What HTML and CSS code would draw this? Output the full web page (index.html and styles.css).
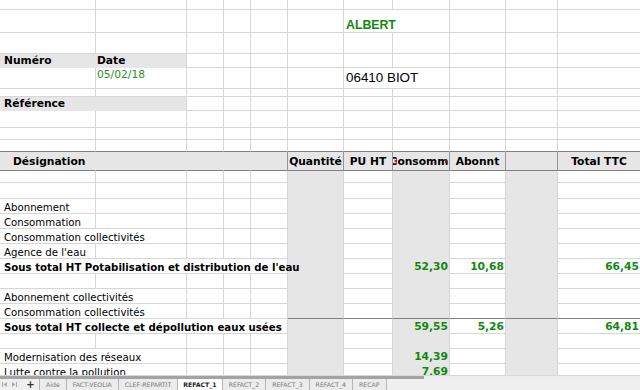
FILE: index.html
```html
<!DOCTYPE html>
<html lang="fr">
<head>
    <meta charset="UTF-8">
    <title>REFACT_1</title>
    <link rel="stylesheet" href="styles.css">
</head>
<body>
<div class="page">
    <div class="sheet">
        <!-- top block -->
        <div class="row h10"><div></div><div></div><div></div><div></div><div></div><div></div><div></div><div></div><div></div><div></div><div></div></div>
        <div class="row h23"><div></div><div></div><div></div><div></div><div></div><div></div><div class="s2 albert">ALBERT</div><div></div><div></div><div></div></div>
        <div class="row h21"><div></div><div></div><div></div><div></div><div></div><div></div><div></div><div></div><div></div><div></div><div></div></div>
        <div class="row h14"><div class="g ga b">Numéro</div><div class="g b pb">Date</div><div></div><div></div><div></div><div></div><div></div><div></div><div></div><div></div><div></div></div>
        <div class="row h21"><div></div><div class="date pb">05/02/18</div><div></div><div></div><div></div><div></div><div class="s2 city">06410 BIOT</div><div></div><div></div><div></div></div>
        <div class="row h8"><div></div><div></div><div></div><div></div><div></div><div></div><div></div><div></div><div></div><div></div><div></div></div>
        <div class="row h14"><div class="g ga b">Référence</div><div class="g"></div><div></div><div></div><div></div><div></div><div></div><div></div><div></div><div></div><div></div></div>
        <div class="row h17"><div></div><div></div><div></div><div></div><div></div><div></div><div></div><div></div><div></div><div></div><div></div></div>
        <div class="row h12"><div></div><div></div><div></div><div></div><div></div><div></div><div></div><div></div><div></div><div></div><div></div></div>
        <div class="row h12 above"><div></div><div></div><div></div><div></div><div></div><div></div><div></div><div></div><div></div><div></div><div></div></div>

        <!-- table header -->
        <div class="row h19 head">
            <div class="desig">Désignation</div><div></div><div></div><div></div><div class="edge"></div>
            <div class="edge">Quantité</div><div class="edge">PU HT</div>
            <div class="edge clip"><span>Consomm.</span></div>
            <div class="edge">Abonnt</div><div class="edge"></div><div>Total TTC</div>
        </div>

        <!-- table body -->
        <div class="row h12 body"><div></div><div></div><div></div><div></div><div></div><div class="g"></div><div></div><div class="g"></div><div></div><div class="g"></div><div></div></div>
        <div class="row h16 body"><div></div><div></div><div></div><div></div><div></div><div class="g"></div><div></div><div class="g"></div><div></div><div class="g"></div><div></div></div>
        <div class="row h15 body"><div class="lbl">Abonnement</div><div></div><div></div><div></div><div></div><div class="g"></div><div></div><div class="g"></div><div></div><div class="g"></div><div></div></div>
        <div class="row h15 body"><div class="lbl">Consommation</div><div></div><div></div><div></div><div></div><div class="g"></div><div></div><div class="g"></div><div></div><div class="g"></div><div></div></div>
        <div class="row h15 body"><div class="s2 lbl">Consommation collectivités</div><div></div><div></div><div></div><div class="g"></div><div></div><div class="g"></div><div></div><div class="g"></div><div></div></div>
        <div class="row h15 body"><div class="lbl">Agence de l'eau</div><div></div><div></div><div></div><div></div><div class="g"></div><div></div><div class="g"></div><div></div><div class="g"></div><div></div></div>
        <div class="row h15 body"><div class="s5 lbl b over">Sous total HT Potabilisation et distribution de l'eau</div><div class="g"></div><div></div><div class="g num">52,30</div><div class="num">10,68</div><div class="g"></div><div class="num">66,45</div></div>
        <div class="row h15 body"><div></div><div></div><div></div><div></div><div></div><div class="g"></div><div></div><div class="g"></div><div></div><div class="g"></div><div></div></div>
        <div class="row h15 body"><div class="s2 lbl">Abonnement collectivités</div><div></div><div></div><div></div><div class="g"></div><div></div><div class="g"></div><div></div><div class="g"></div><div></div></div>
        <div class="row h15 body"><div class="s2 lbl">Consommation collectivités</div><div></div><div></div><div></div><div class="g dk"></div><div class="dk"></div><div class="g dk"></div><div class="dk"></div><div class="g dk"></div><div class="dk"></div></div>
        <div class="row h15 body"><div class="s5 lbl b over">Sous total HT collecte et dépollution eaux usées</div><div class="g"></div><div></div><div class="g num">59,55</div><div class="num">5,26</div><div class="g"></div><div class="num">64,81</div></div>
        <div class="row h15 body"><div></div><div></div><div></div><div></div><div></div><div class="g"></div><div></div><div class="g"></div><div></div><div class="g"></div><div></div></div>
        <div class="row h15 body"><div class="s2 lbl">Modernisation des réseaux</div><div></div><div></div><div></div><div class="g"></div><div></div><div class="g num">14,39</div><div></div><div class="g"></div><div></div></div>
        <div class="row h15 body"><div class="s2 lbl">Lutte contre la pollution</div><div></div><div></div><div></div><div class="g"></div><div></div><div class="g num">7,69</div><div></div><div class="g"></div><div></div></div>
    </div>

    <div class="hscroll"><div class="thumb"></div></div>

    <div class="tabbar">
        <span class="nav">
            <svg width="5" height="5" viewBox="0 0 5 5"><rect x="0" y="0" width="1" height="5" fill="#aaa"/><path d="M5 0 L1.5 2.5 L5 5 Z" fill="#aaa"/></svg>
        </span>
        <span class="nav">
            <svg width="5" height="5" viewBox="0 0 5 5"><path d="M0 0 L3.5 2.5 L0 5 Z" fill="#aaa"/><rect x="4" y="0" width="1" height="5" fill="#aaa"/></svg>
        </span>
        <span class="add">+</span>
        <span class="tab">Aide</span>
        <span class="tab">FACT-VEOLIA</span>
        <span class="tab">CLEF-REPARTIT</span>
        <span class="tab active">REFACT_1</span>
        <span class="tab">REFACT_2</span>
        <span class="tab">REFACT_3</span>
        <span class="tab">REFACT_4</span>
        <span class="tab">RECAP</span>
    </div>
</div>
</body>
</html>
```

FILE: styles.css
```css
* {
    box-sizing: border-box;
}
body {
    margin: 0;
    font-family: "DejaVu Sans", sans-serif;
    font-size: 10.7px;
    color: #000;
    background: #fff;
}
.page {
    height: 390px;
    display: flex;
    flex-direction: column;
    overflow: hidden;
}
.sheet {
    height: 375px;
    flex: none;
    overflow: hidden;
}

/* one spreadsheet row, same columns everywhere */
.row {
    display: grid;
    grid-template-columns: 96px 91px 37px 27px 37px 56px 49px 57px 56px 52px 82px;
}
.row > div {
    display: flex;
    align-items: flex-end;
    padding: 0 2px;
    white-space: nowrap;
    border-right: 1px solid #d6d6d6;
    border-bottom: 1px solid #d6d6d6;
    min-width: 0;
}
.row > div:first-child {
    padding-left: 4px;
}
.row > div:last-child {
    border-right: none;
}
.h8 { height: 8px; }
.h10 { height: 10px; }
.h12 { height: 12px; }
.h14 { height: 14px; }
.h15 { height: 15px; }
.h16 { height: 16px; }
.h17 { height: 17px; }
.h19 { height: 19px; }
.h21 { height: 21px; }
.h23 { height: 23px; }

.s2 { grid-column: span 2; }
.s3 { grid-column: span 3; }
.s5 { grid-column: span 5; }
.over { z-index: 1; }

.b { font-weight: bold; }
.lbl { font-size: 10.2px; }
.g {
    background: #e6e6e6;
    border-bottom-color: #e6e6e6 !important;
}
.ga {
    border-right-color: #e6e6e6 !important;
}
.pb { padding-left: 1px !important; }

.albert {
    font-family: "Liberation Sans", Arial, sans-serif;
    font-weight: bold;
    font-size: 12.3px;
    color: #108810;
}
.date {
    align-items: flex-start !important;
    color: #2f8f1f;
}
.city {
    font-family: "Liberation Sans", Arial, sans-serif;
    font-size: 13.4px;
    padding-bottom: 3px !important;
}
.row.above > div {
    border-bottom-color: #808080;
}

/* header of the table */
.head > div {
    background: #e6e6e6;
    font-weight: bold;
    align-items: center;
    justify-content: center;
    border-bottom-color: #808080;
    border-right-color: #e6e6e6;
}
.head > div.edge {
    border-right-color: #959595;
}
.head > div.desig {
    justify-content: flex-start;
    padding-left: 13px;
}
.clip {
    position: relative;
    overflow: hidden;
}
.clip::before,
.clip::after {
    content: "";
    position: absolute;
    top: 7px;
    border-top: 2px solid transparent;
    border-bottom: 2px solid transparent;
}
.clip::before {
    left: 1px;
    border-right: 3px solid #e00000;
}
.clip::after {
    right: 1px;
    border-left: 3px solid #e00000;
}

.body > div.dk {
    border-bottom-color: #808080 !important;
}
.num {
    justify-content: flex-end;
    font-weight: bold;
    color: #108810;
    padding-right: 1px !important;
}

/* horizontal scrollbar and sheet tabs */
.hscroll {
    height: 4px;
    flex: none;
    background: #ededed;
    border-top: 1px solid #d8d8d8;
}
.thumb {
    width: 424px;
    height: 3px;
    background: #a3a3a3;
}
.tabbar {
    flex: 1;
    display: flex;
    align-items: stretch;
    background: #efefef;
    font-size: 6.2px;
    color: #777;
    padding-left: 2px;
}
.nav {
    display: flex;
    align-items: center;
    width: 10px;
}
.add {
    display: flex;
    align-items: center;
    justify-content: center;
    width: 17px;
    font-size: 10px;
    font-weight: bold;
    color: #333;
}
.tab {
    display: flex;
    align-items: center;
    justify-content: center;
    padding: 0 6px;
    border-left: 1px solid #b5b5b5;
    background: #ececec;
}
.tab:last-child {
    border-right: 1px solid #b5b5b5;
}
.tab.active {
    background: #fff;
    color: #222;
    font-weight: bold;
    padding: 0 5px;
}
```
